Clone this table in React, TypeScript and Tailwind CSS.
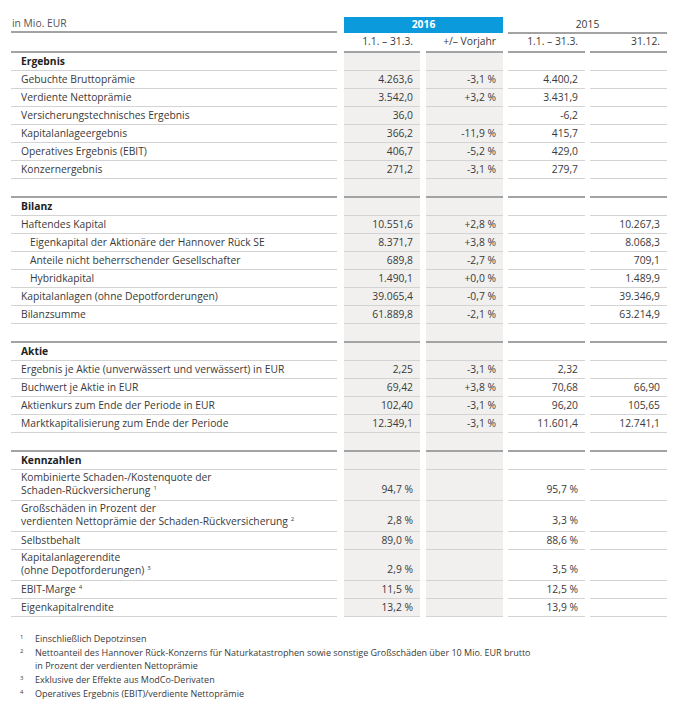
import { ReactNode } from "react";

type Line = "light" | "dark";

interface Row {
  label?: ReactNode;
  vals?: string[];
  indent?: boolean;
  bold?: boolean;
  tall?: boolean;
  line?: Line;
}

const Sup = ({ n }: { n: string }) => (
  <sup className="relative -top-[4px] ml-[3px] text-[6px]">{n}</sup>
);

const rows: Row[] = [
  { label: "Ergebnis", bold: true },
  { label: "Gebuchte Bruttoprämie", vals: ["4.263,6", "-3,1 %", "4.400,2", ""] },
  { label: "Verdiente Nettoprämie", vals: ["3.542,0", "+3,2 %", "3.431,9", ""] },
  { label: "Versicherungstechnisches Ergebnis", vals: ["36,0", "", "-6,2", ""] },
  { label: "Kapitalanlageergebnis", vals: ["366,2", "-11,9 %", "415,7", ""] },
  { label: "Operatives Ergebnis (EBIT)", vals: ["406,7", "-5,2 %", "429,0", ""] },
  { label: "Konzernergebnis", vals: ["271,2", "-3,1 %", "279,7", ""] },
  { line: "dark" },
  { label: "Bilanz", bold: true },
  { label: "Haftendes Kapital", vals: ["10.551,6", "+2,8 %", "", "10.267,3"] },
  { label: "Eigenkapital der Aktionäre der Hannover Rück SE", indent: true, vals: ["8.371,7", "+3,8 %", "", "8.068,3"] },
  { label: "Anteile nicht beherrschender Gesellschafter", indent: true, vals: ["689,8", "-2,7 %", "", "709,1"] },
  { label: "Hybridkapital", indent: true, vals: ["1.490,1", "+0,0 %", "", "1.489,9"] },
  { label: "Kapitalanlagen (ohne Depotforderungen)", vals: ["39.065,4", "-0,7 %", "", "39.346,9"] },
  { label: "Bilanzsumme", vals: ["61.889,8", "-2,1 %", "", "63.214,9"] },
  { line: "dark" },
  { label: "Aktie", bold: true },
  { label: "Ergebnis je Aktie (unverwässert und verwässert) in EUR", vals: ["2,25", "-3,1 %", "2,32", ""] },
  { label: "Buchwert je Aktie in EUR", vals: ["69,42", "+3,8 %", "70,68", "66,90"] },
  { label: "Aktienkurs zum Ende der Periode in EUR", vals: ["102,40", "-3,1 %", "96,20", "105,65"] },
  { label: "Marktkapitalisierung zum Ende der Periode", vals: ["12.349,1", "-3,1 %", "11.601,4", "12.741,1"] },
  { line: "dark" },
  { label: "Kennzahlen", bold: true },
  {
    label: (
      <>
        Kombinierte Schaden-/Kostenquote der
        <br />
        Schaden-Rückversicherung
        <Sup n="1" />
      </>
    ),
    tall: true,
    vals: ["94,7 %", "", "95,7 %", ""],
  },
  {
    label: (
      <>
        Großschäden in Prozent der
        <br />
        verdienten Nettoprämie der Schaden-Rückversicherung
        <Sup n="2" />
      </>
    ),
    tall: true,
    vals: ["2,8 %", "", "3,3 %", ""],
  },
  { label: "Selbstbehalt", vals: ["89,0 %", "", "88,6 %", ""] },
  {
    label: (
      <>
        Kapitalanlagerendite
        <br />
        (ohne Depotforderungen)
        <Sup n="3" />
      </>
    ),
    tall: true,
    vals: ["2,9 %", "", "3,5 %", ""],
  },
  {
    label: (
      <>
        EBIT-Marge
        <Sup n="4" />
      </>
    ),
    vals: ["11,5 %", "", "12,5 %", ""],
  },
  { label: "Eigenkapitalrendite", vals: ["13,2 %", "", "13,9 %", ""] },
];

const colW = ["ml-[7px] w-[76px] bg-[#f1f0ee]", "ml-[6px] w-[77px] bg-[#f1f0ee]", "ml-[5px] w-[77px]", "ml-[5px] w-[77px]"];

const TableRow = ({ row }: { row: Row }) => {
  const dark = row.line === "dark";
  const border = dark ? "border-b-2 border-[#a3a3a3]" : "border-b border-[#d3d3d3]";
  const h = row.tall ? "h-[31px] items-end pb-[3px]" : dark ? "h-[19px] items-center" : "h-[18px] items-center";
  return (
    <div className="flex">
      <div
        className={`flex w-[326px] ${h} ${border} ${row.indent ? "pl-[19px]" : "pl-[10px]"} ${
          row.bold ? "font-bold text-[#222]" : ""
        } leading-[13px]`}
      >
        <div>{row.label}</div>
      </div>
      {colW.map((c, i) => (
        <div key={i} className={`flex justify-end pr-[7px] ${c} ${h} ${border}`}>
          {row.vals?.[i]}
        </div>
      ))}
    </div>
  );
};

const notes: [string, ReactNode][] = [
  ["1", "Einschließlich Depotzinsen"],
  [
    "2",
    <>
      Nettoanteil des Hannover Rück-Konzerns für Naturkatastrophen sowie sonstige Großschäden über 10 Mio. EUR brutto
      <br />
      in Prozent der verdienten Nettoprämie
    </>,
  ],
  ["3", "Exklusive der Effekte aus ModCo-Derivaten"],
  ["4", "Operatives Ergebnis (EBIT)/verdiente Nettoprämie"],
];

export default function App() {
  return (
    <div className="min-h-screen w-[700px] bg-white pl-[11px] pt-[17px] font-['Open_Sans',sans-serif] text-[10.3px] text-[#3a3a3a]">
      {/* Header */}
      <div className="flex">
        <div className="flex h-[16px] w-[326px] items-center border-b-2 border-[#a3a3a3] pl-[1px] text-[#555]">
          in Mio. EUR
        </div>
        <div className="ml-[7px] flex h-[16px] w-[159px] items-center justify-center bg-[#0b9bdc] font-bold text-white">
          2016
        </div>
        <div className="ml-[5px] flex h-[17px] w-[159px] items-center justify-center border-b-2 border-[#a3a3a3]">
          2015
        </div>
      </div>
      <div className="flex -mt-[1px]">
        <div className="h-[20px] w-[326px] border-b-2 border-[#a3a3a3]" />
        {["1.1. – 31.3.", "+/– Vorjahr", "1.1. – 31.3.", "31.12."].map((t, i) => (
          <div
            key={i}
            className={`flex h-[20px] items-center justify-end border-b-2 border-[#a3a3a3] pr-[7px] ${
              ["ml-[7px] w-[76px]", "ml-[6px] w-[77px]", "ml-[5px] w-[77px]", "ml-[5px] w-[77px]"][i]
            }`}
          >
            {t}
          </div>
        ))}
      </div>

      {rows.map((r, i) => (
        <TableRow key={i} row={r} />
      ))}

      {/* Footnotes */}
      <div className="mt-[15px] flex flex-col gap-[1px] text-[9px] leading-[13px]">
        {notes.map(([n, t]) => (
          <div key={n} className="flex">
            <span className="w-[24px] pl-[9px] text-[6px] leading-[10px]">{n}</span>
            <span>{t}</span>
          </div>
        ))}
      </div>
    </div>
  );
}
